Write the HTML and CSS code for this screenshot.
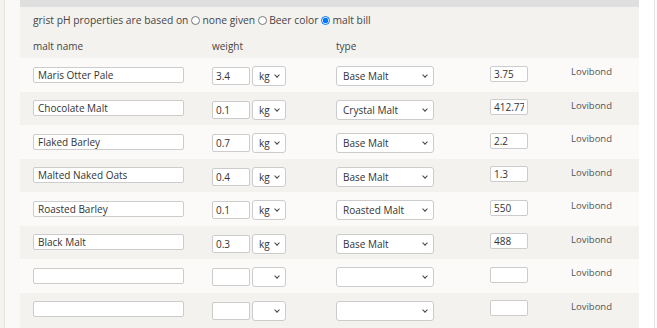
FILE: index.html
```html
<!DOCTYPE html>
<html lang="en">
<head>
    <meta charset="UTF-8">
    <title>grist</title>
    <link rel="stylesheet" href="styles.css">
</head>
<body>
    <div id="page">
        <div class="edge"></div>
        <div class="gutter"></div>
        <div id="panel">
            <div class="topband"></div>
            <div class="basis">
                <span>grist pH properties are based on</span>
                <label><input type="radio" name="basis"> none given</label>
                <label><input type="radio" name="basis"> Beer color</label>
                <label><input type="radio" name="basis" checked> malt bill</label>
            </div>
            <div class="row head">
                <div>malt name</div>
                <div>weight</div>
                <div>type</div>
                <div></div>
                <div></div>
            </div>

            <div class="row light">
                <div><input class="name" type="text" value="Maris Otter Pale"></div>
                <div class="wt"><input class="num" type="text" value="3.4"><span class="pick"><select class="unit"><option>kg</option></select></span></div>
                <div><span class="pick"><select class="type"><option>Base Malt</option></select></span></div>
                <div><input class="num col" type="text" value="3.75"></div>
                <div class="lovi">Lovibond</div>
            </div>
            <div class="row">
                <div><input class="name" type="text" value="Chocolate Malt"></div>
                <div class="wt"><input class="num" type="text" value="0.1"><span class="pick"><select class="unit"><option>kg</option></select></span></div>
                <div><span class="pick"><select class="type"><option>Crystal Malt</option></select></span></div>
                <div><input class="num col" type="text" value="412.77"></div>
                <div class="lovi">Lovibond</div>
            </div>
            <div class="row light">
                <div><input class="name" type="text" value="Flaked Barley"></div>
                <div class="wt"><input class="num" type="text" value="0.7"><span class="pick"><select class="unit"><option>kg</option></select></span></div>
                <div><span class="pick"><select class="type"><option>Base Malt</option></select></span></div>
                <div><input class="num col" type="text" value="2.2"></div>
                <div class="lovi">Lovibond</div>
            </div>
            <div class="row">
                <div><input class="name" type="text" value="Malted Naked Oats"></div>
                <div class="wt"><input class="num" type="text" value="0.4"><span class="pick"><select class="unit"><option>kg</option></select></span></div>
                <div><span class="pick"><select class="type"><option>Base Malt</option></select></span></div>
                <div><input class="num col" type="text" value="1.3"></div>
                <div class="lovi">Lovibond</div>
            </div>
            <div class="row light">
                <div><input class="name" type="text" value="Roasted Barley"></div>
                <div class="wt"><input class="num" type="text" value="0.1"><span class="pick"><select class="unit"><option>kg</option></select></span></div>
                <div><span class="pick"><select class="type"><option>Roasted Malt</option></select></span></div>
                <div><input class="num col" type="text" value="550"></div>
                <div class="lovi">Lovibond</div>
            </div>
            <div class="row">
                <div><input class="name" type="text" value="Black Malt"></div>
                <div class="wt"><input class="num" type="text" value="0.3"><span class="pick"><select class="unit"><option>kg</option></select></span></div>
                <div><span class="pick"><select class="type"><option>Base Malt</option></select></span></div>
                <div><input class="num col" type="text" value="488"></div>
                <div class="lovi">Lovibond</div>
            </div>
            <div class="row light">
                <div><input class="name" type="text" value=""></div>
                <div class="wt"><input class="num" type="text" value=""><span class="pick"><select class="unit"><option></option></select></span></div>
                <div><span class="pick"><select class="type"><option></option></select></span></div>
                <div><input class="num col" type="text" value=""></div>
                <div class="lovi">Lovibond</div>
            </div>
            <div class="row">
                <div><input class="name" type="text" value=""></div>
                <div class="wt"><input class="num" type="text" value=""><span class="pick"><select class="unit"><option></option></select></span></div>
                <div><span class="pick"><select class="type"><option></option></select></span></div>
                <div><input class="num col" type="text" value=""></div>
                <div class="lovi">Lovibond</div>
            </div>
        </div>
        <div class="aside"></div>
    </div>
</body>
</html>
```

FILE: styles.css
```css
body{
    margin: 0;
    background-color: white;
    font-family: "Open Sans", "Liberation Sans", sans-serif;
    color: #454545;
    overflow: hidden;
}
#page{
    display: flex;
    height: 328px;
}
.edge{
    width: 4px;
    background-color: #f5f3f0;
    border-right: 1px solid #e6e3df;
}
.gutter{
    width: 15px;
    background-color: #faf9f7;
}
#panel{
    width: 619px;
    background-color: #f3f2ef;
}
.topband{
    height: 7px;
    background-color: #dfdfdf;
}
.basis{
    height: 26px;
    display: flex;
    align-items: center;
    padding-left: 13px;
    font-size: 10.3px;
}
.basis label{
    display: flex;
    align-items: center;
}
.basis input{
    width: 9px;
    height: 9px;
    margin: 0 2px 0 3px;
}
.row{
    display: grid;
    grid-template-columns: 179px 124px 154px 80px auto;
    align-items: center;
    padding-left: 13px;
    height: 33.5px;
    font-size: 10px;
}
.head{
    height: 25px;
}
.light{
    background-color: #fbfaf8;
}
.row input, .row select{
    font-family: "Open Sans", "Liberation Sans", sans-serif;
    font-size: 10px;
    color: #333;
    background-color: white;
    border: 1px solid #cccccc;
    border-radius: 2px;
    box-sizing: border-box;
    margin: 0;
    display: block;
}
.row select{
    appearance: none;
    -webkit-appearance: none;
    border-radius: 3px;
    padding: 0 0 0 6px;
    height: 20px;
}
.pick{
    position: relative;
    display: block;
    width: max-content;
}
/* small chevron drawn over the select */
.pick::after{
    content: "";
    position: absolute;
    right: 7px;
    top: 7px;
    width: 3px;
    height: 3px;
    border-right: 1.5px solid #444;
    border-bottom: 1.5px solid #444;
    transform: rotate(45deg);
    pointer-events: none;
}
.name{
    width: 151px;
    height: 16px;
    padding: 0 4px;
}
.wt{
    display: flex;
    align-items: center;
    gap: 2px;
    padding-top: 3px;
}
.num{
    width: 38px;
    height: 18px;
    padding: 0 3px;
}
.col{
    height: 16px;
    margin-bottom: 2px !important;
}
.unit{
    width: 34px;
}
.type{
    width: 98px;
}
div > .pick .type{
    margin-top: 3px;
}
.lovi{
    font-size: 9.5px;
    padding-left: 1px;
    margin-bottom: 6px;
    color: #555;
}
.aside{
    width: 15px;
    border-right: 1px solid #e4e4e4;
}
```
